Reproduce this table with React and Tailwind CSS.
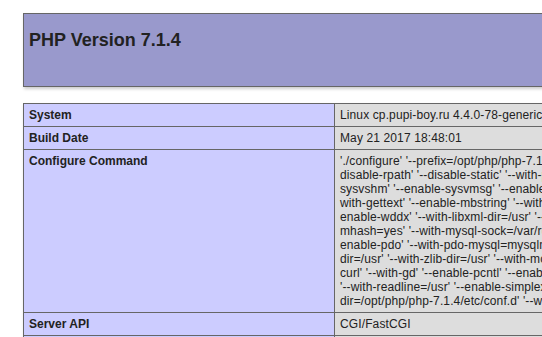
import React from "react";

const configLines = [
  "'./configure' '--prefix=/opt/php/php-7.1.4' '--with-config-file-path=/opt/php/php-7.1.4/etc' '--",
  "disable-rpath' '--disable-static' '--with-pic' '--with-layout=GNU' '--enable-calendar' '--enable-sysvsem' '--enable-",
  "sysvshm' '--enable-sysvmsg' '--enable-bcmath' '--with-bz2' '--enable-ctype' '--with-iconv' '--enable-exif' '--enable-ftp' '--",
  "with-gettext' '--enable-mbstring' '--with-onig=/usr' '--enable-shmop' '--enable-sockets' '--enable-tokenizer' '--",
  "enable-wddx' '--with-libxml-dir=/usr' '--with-xsl' '--enable-xml' '--enable-zip' '--with-mhash' '--with-",
  "mhash=yes' '--with-mysql-sock=/var/run/mysqld/mysqld.sock' '--with-mysqli=mysqlnd' '--with-sqlite3' '--",
  "enable-pdo' '--with-pdo-mysql=mysqlnd' '--with-pdo-sqlite' '--with-imap' '--with-imap-ssl' '--with-kerberos' '--with-png-",
  "dir=/usr' '--with-zlib-dir=/usr' '--with-mcrypt' '--with-openssl' '--with-freetype-dir=/usr' '--with-jpeg-dir=/usr' '--with-",
  "curl' '--with-gd' '--enable-pcntl' '--enable-soap' '--enable-intl' '--with-ldap' '--with-xmlrpc' '--with-tidy' '--enable-opcache'",
  "'--with-readline=/usr' '--enable-simplexml' '--enable-fpm' '--with-fpm-user=www-data' '--with-config-file-scan-",
  "dir=/opt/php/php-7.1.4/etc/conf.d' '--with-pear' '--with-xpm-dir=/usr'",
];

function Row({ label, children }) {
  return (
    <div className="flex">
      <div className="w-[311px] shrink-0 border-r border-b border-[#666] bg-[#ccf] px-[5px] py-[4px] font-bold">
        {label}
      </div>
      <div className="flex-1 border-r border-b border-[#666] bg-[#ddd] px-[5px] py-[4px] tracking-[0.12px]">
        {children}
      </div>
    </div>
  );
}

export default function App() {
  return (
    <div
      className="w-[542px] h-[337px] overflow-hidden bg-white text-[#222]"
      style={{ fontFamily: '"Liberation Sans", Arial, sans-serif' }}
    >
      <div className="pl-[23px] pt-[13px] w-[1000px]">
        <div className="w-[934px] h-[74px] border border-[#666] bg-[#99c] shadow-[1px_2px_3px_#ccc] px-[5px] pt-[16px]">
          <h1 className="text-[18px] leading-[21px] font-bold">PHP Version 7.1.4</h1>
        </div>
        <div className="mt-[16px] w-[934px] border-l border-t border-[#666] text-[12px] leading-[14px] shadow-[1px_2px_3px_#ccc]">
          <Row label="System">
            <div className="whitespace-nowrap">
              Linux cp.pupi-boy.ru 4.4.0-78-generic #99-Ubuntu SMP Thu Apr 27 15:29:09 UTC 2017 x86_64
            </div>
          </Row>
          <Row label="Build Date">May 21 2017 18:48:01</Row>
          <Row label="Configure Command">
            {configLines.map((l, i) => (
              <div key={i} className="whitespace-pre">
                {l}
              </div>
            ))}
          </Row>
          <Row label="Server API">CGI/FastCGI</Row>
          <Row label="Virtual Directory Support">disabled</Row>
        </div>
      </div>
    </div>
  );
}
